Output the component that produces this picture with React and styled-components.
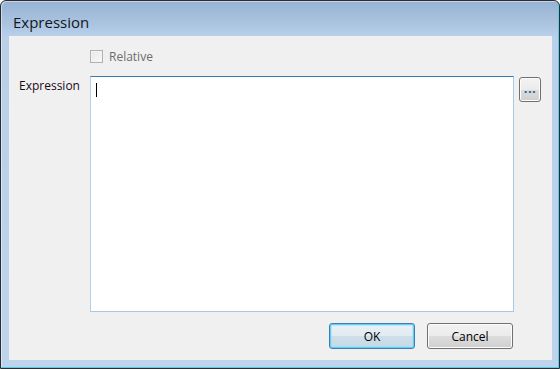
import React from 'react'
import styled, { createGlobalStyle } from 'styled-components'

const GlobalStyle = createGlobalStyle`
    html, body {
        margin: 0;
        padding: 0;
        background: #ffffff;
    }
    body {
        font-family: "Open Sans", "Noto Sans", "Liberation Sans", sans-serif;
    }
`

const App = () => {
    return (
        <>
            <GlobalStyle />
            <Window>
                <TitleBar>Expression</TitleBar>
                <Frame>
                    <Client>
                        <FormGrid>
                            <span />
                            <CheckRow>
                                <CheckBox />
                                <CheckLabel>Relative</CheckLabel>
                            </CheckRow>
                            <FieldLabel>Expression</FieldLabel>
                            <EditorRow>
                                <Editor>
                                    <Caret />
                                </Editor>
                                <EllipsisBtn>...</EllipsisBtn>
                            </EditorRow>
                        </FormGrid>
                        <ButtonRow>
                            <DialogBtn focused>OK</DialogBtn>
                            <DialogBtn>Cancel</DialogBtn>
                        </ButtonRow>
                    </Client>
                </Frame>
            </Window>
        </>
    )
}

export default App

const Window = styled.div`
    width: 560px;
    height: 369px;
    box-sizing: border-box;
    display: flex;
    flex-direction: column;
    border: 1px solid #2a2e33;
    border-radius: 6px 6px 0 0;
    background: linear-gradient(to bottom, #98b3d2 0px, #a9c3e0 22px, #b9d0ea 36px, #bdd4ec 100%);
    box-shadow: inset -1px -1px 0 #58cbe9, inset 1px 1px 0 rgba(255, 255, 255, 0.45);
    overflow: hidden;
`

const TitleBar = styled.div`
    height: 35px;
    flex-shrink: 0;
    display: flex;
    align-items: center;
    padding-left: 12px;
    padding-top: 7px;
    box-sizing: border-box;
    font-size: 15px;
    color: #111820;
`

const Frame = styled.div`
    flex: 1;
    display: flex;
    padding: 0 7px 8px 8px;
`

const Client = styled.div`
    flex: 1;
    display: flex;
    flex-direction: column;
    background: #f0f0f0;
    padding: 13px 0 0 0;
`

const FormGrid = styled.div`
    display: grid;
    grid-template-columns: 81px 1fr;
    row-gap: 12px;
    align-items: start;
`

const CheckRow = styled.div`
    display: flex;
    align-items: center;
    gap: 6px;
    height: 15px;
`

const CheckBox = styled.span`
    width: 13px;
    height: 13px;
    box-sizing: border-box;
    border: 1px solid #b1b1b1;
    background: linear-gradient(135deg, #e8e8e8, #f8f8f8);
    box-shadow: inset 0 0 0 1px #f4f4f4;
`

const CheckLabel = styled.span`
    font-size: 12px;
    color: #6d6d6d;
`

const FieldLabel = styled.span`
    padding: 2px 0 0 10px;
    font-size: 12px;
    color: #1a0a14;
    line-height: 16px;
`

const EditorRow = styled.div`
    display: flex;
    align-items: flex-start;
    gap: 5px;
`

const Editor = styled.div`
    width: 424px;
    height: 236px;
    box-sizing: border-box;
    background: #ffffff;
    border: 1px solid #a6c9e6;
    border-top-color: #3d7bad;
    border-left-color: #b5cfe7;
    padding: 3px 5px;
`

const Caret = styled.span`
    display: inline-block;
    width: 1px;
    height: 14px;
    background: #000000;
`

const EllipsisBtn = styled.button`
    width: 22px;
    height: 25px;
    margin-top: 1px;
    box-sizing: border-box;
    border: 1px solid #707070;
    border-radius: 3px;
    background: linear-gradient(to bottom, #f3f3f3 0%, #ebebeb 50%, #dddddd 50%, #cfcfcf 100%);
    box-shadow: inset 0 0 0 1px #fcfcfc;
    padding: 0;
    font-family: inherit;
    font-size: 13px;
    font-weight: bold;
    color: #1f5f97;
    line-height: 1;
    display: flex;
    align-items: flex-end;
    justify-content: center;
    padding-bottom: 6px;
    letter-spacing: 0.5px;
`

const ButtonRow = styled.div`
    display: flex;
    justify-content: flex-end;
    gap: 12px;
    margin-top: 11px;
    padding-right: 39px;
`

const DialogBtn = styled.button`
    width: 86px;
    height: 26px;
    box-sizing: border-box;
    border-radius: 3px;
    font-family: inherit;
    font-size: 12px;
    color: #000000;
    padding: 0;
    border: 1px solid ${p => (p.focused ? '#3c7fb1' : '#707070')};
    background: ${p =>
        p.focused
            ? 'linear-gradient(to bottom, #eaf1f6 0%, #e1ebf2 50%, #cfdfea 50%, #c5d9e6 100%)'
            : 'linear-gradient(to bottom, #f2f2f2 0%, #ebebeb 50%, #dddddd 50%, #cfcfcf 100%)'};
    box-shadow: ${p =>
        p.focused
            ? 'inset 0 0 0 1px #5fd0f3, inset 0 0 0 2px rgba(150, 220, 245, 0.5)'
            : 'inset 0 0 0 1px #fcfcfc'};
`
